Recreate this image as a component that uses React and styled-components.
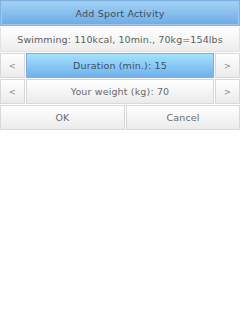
import React from "react";
import styled, { createGlobalStyle } from "styled-components";

const Global = createGlobalStyle`
  html, body { margin: 0; padding: 0; background: #fff; }
  body { font-family: "DejaVu Sans", sans-serif; }
`;

const Screen = styled.div`
  width: 240px;
  height: 320px;
  display: flex;
  flex-direction: column;
  background: #fff;
`;

const TitleBar = styled.div`
  height: 24px;
  display: flex;
  align-items: center;
  justify-content: center;
  background: linear-gradient(#a3d4f7, #6ea9e2);
  border: 1px solid #7fb2e3;
  box-shadow: inset 0 0 0 1px #9cc8f0;
  color: #3a5068;
  font-size: 9.5px;
  letter-spacing: 0.2px;
`;

const InfoRow = styled.div`
  height: 23px;
  margin-top: 1px;
  display: flex;
  align-items: center;
  justify-content: center;
  background: linear-gradient(#ffffff, #ececec);
  border: 1px solid #e2e2e2;
  border-top-color: #f4f4f4;
  color: #5e5e5e;
  font-size: 9.5px;
  letter-spacing: 0.1px;
`;

const Row = styled.div`
  display: flex;
  gap: 1px;
  margin-top: 1px;
  height: 25px;
`;

const Cell = styled.div`
  flex: ${(p) => (p.$w ? "none" : "1 1 0")};
  width: ${(p) => (p.$w ? `${p.$w}px` : "auto")};
  box-sizing: border-box;
  display: flex;
  align-items: center;
  justify-content: center;
  font-size: ${(p) => (p.$arrow ? "8.5px" : "9.5px")};
  letter-spacing: 0.15px;
  color: ${(p) => (p.$active ? "#3a5068" : p.$arrow ? "#8c8c8c" : "#6a6a6a")};
  background: ${(p) =>
    p.$active
      ? "linear-gradient(#a3e2fc, #71b0eb)"
      : "linear-gradient(#ffffff, #ebebeb)"};
  border: 1px solid ${(p) => (p.$active ? "#7ab0e4" : "#d8d8d8")};
`;

export default function App() {
  return (
    <Screen>
      <Global />
      <TitleBar>Add Sport Activity</TitleBar>
      <InfoRow>Swimming: 110kcal, 10min., 70kg=154lbs</InfoRow>
      <Row>
        <Cell $w={25} $arrow>&lt;</Cell>
        <Cell $active>Duration (min.): 15</Cell>
        <Cell $w={25} $arrow>&gt;</Cell>
      </Row>
      <Row>
        <Cell $w={25} $arrow>&lt;</Cell>
        <Cell>Your weight (kg): 70</Cell>
        <Cell $w={25} $arrow>&gt;</Cell>
      </Row>
      <Row>
        <Cell $w={125}>OK</Cell>
        <Cell>Cancel</Cell>
      </Row>
    </Screen>
  );
}
